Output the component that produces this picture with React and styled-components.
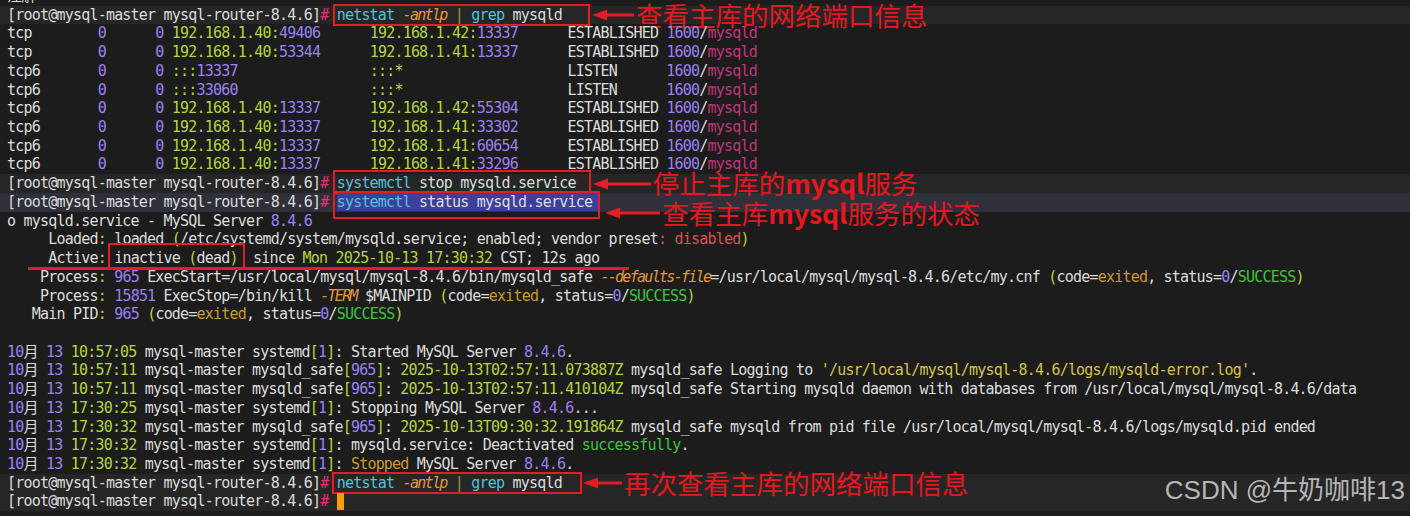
import React from 'react';
import styled, { createGlobalStyle } from 'styled-components';

const GlobalStyle = createGlobalStyle`
  html, body {
    margin: 0;
    padding: 0;
    background: #1c1c1c;
  }
`;

const RED = '#e51c23';
const ROW = 18.73;

const tones = {
  w: '#dcdcdc',
  p: '#9d80f2',
  g: '#b3d43e',
  c: '#4fc3d8',
  o: '#e3973a',
  m: '#c2367c',
  r: '#d9534f',
  s: '#3ec43e',
  e: '#c99a2e',
  y: '#d6c24a',
  h: '#e3336f',
  pipe: '#9c9440',
};

const bands = {
  prompt: '#262626',
  current: '#2f303a',
};

const Screen = styled.div`
  position: relative;
  width: 1410px;
  height: 516px;
  overflow: hidden;
  background: #1c1c1c;
`;

// scrolled terminal buffer: the line above the first prompt is cut by the window top
const Buffer = styled.div`
  margin-top: -13px;
  font-family: "DejaVu Sans Mono", "Noto Sans CJK SC", monospace;
  font-size: 15px;
  letter-spacing: -0.79px;
  color: #dcdcdc;
`;

const Line = styled.div`
  height: ${ROW}px;
  line-height: ${ROW}px;
  padding-left: 7px;
  white-space: pre;
  background: ${p => bands[p.$band] || 'transparent'};
`;

// the terminal's italic face is narrower than its upright one
const Seg = styled.span`
  color: ${p => tones[p.$tone]};
  font-style: ${p => (p.$tone === 'o' ? 'italic' : 'normal')};
  letter-spacing: ${p => (p.$tone === 'o' ? '-1.7px' : 'inherit')};
`;

const Selection = styled.span`
  background: #3c3f9c;
  padding-right: 6px;
`;

const Cursor = styled.span`
  display: inline-block;
  width: 7px;
  height: 17px;
  vertical-align: -4px;
  background: #f5a000;
`;

// hand-drawn red frame round a part of a line; it grows outward without moving the text
const Marked = styled.span`
  display: inline-block;
  vertical-align: top;
  border: 2px solid ${RED};
  padding: ${p => p.$t - 2}px ${p => p.$r - 2}px ${p => p.$b - 2}px ${p => p.$l - 2}px;
  margin: ${p => -p.$t}px 0 ${p => -p.$b}px ${p => -p.$l}px;
`;

const Callout = styled.span`
  display: inline-flex;
  align-items: center;
  gap: 2px;
  height: ${ROW}px;
  vertical-align: top;
  margin-left: ${p => p.$gap}px;
  padding-top: ${p => p.$drop}px;
  margin-bottom: ${p => -p.$drop}px;
`;

const Note = styled.span`
  font-family: "Noto Sans CJK SC", sans-serif;
  font-size: 26.5px;
  line-height: 1;
  letter-spacing: 0;
  color: #e8161f;
  white-space: nowrap;

  b {
    font-weight: 700;
  }
`;

const Strike = styled.div`
  width: 601px;
  height: 3px;
  margin: -1px 0 -2px 28px;
  background: ${RED};
  position: relative;
`;

const Watermark = styled.div`
  position: absolute;
  right: 5px;
  bottom: 13px;
  font-family: "Liberation Sans", "Noto Sans CJK SC", sans-serif;
  font-size: 26px;
  line-height: 1;
  color: #b6b6b6;
  white-space: nowrap;
`;

function Arrow({ len }) {
  return (
    <svg width={len} height={12} viewBox={`0 0 ${len} 12`}>
      <polygon points="0,6 15,0.5 15,11.5" fill={RED} />
      <rect x="13" y="4.5" width={len - 13} height="3" fill={RED} />
    </svg>
  );
}

const prompt = [['w', '[root@mysql-master mysql-router-8.4.6]'], ['h', '#'], ['w', ' ']];
const netstatCmd = [
  ['c', 'netstat'], ['w', ' '], ['o', '-antlp'], ['w', ' '], ['pipe', '|'],
  ['w', ' '], ['c', 'grep'], ['w', ' mysqld'],
];

const est = (proto, lport, rhost, rport) => [
  ['w', proto.padEnd(11)], ['p', '0'], ['w', '      '], ['p', '0'], ['w', ' '],
  ['g', '192.168.1.40:'], ['p', lport], ['w', '      '],
  ['g', `192.168.1.${rhost}:`], ['p', rport], ['w', '      '],
  ['w', 'ESTABLISHED '], ['p', '1600'], ['w', '/'], ['m', 'mysqld'],
];

const listen = port => [
  ['w', 'tcp6       '], ['p', '0'], ['w', '      '], ['p', '0'], ['w', ' '],
  ['g', ':::'], ['p', port], ['w', ' '.repeat(16)], ['g', ':::*'], ['w', ' '.repeat(20)],
  ['w', 'LISTEN      '], ['p', '1600'], ['w', '/'], ['m', 'mysqld'],
];

const exited = [
  ['g', '('], ['w', 'code='], ['e', 'exited'], ['w', ', status='], ['p', '0'],
  ['w', '/'], ['s', 'SUCCESS'], ['g', ')'],
];

const log = (time, proc, pid) => [
  ['p', '10'], ['w', '月 '], ['p', '13'], ['w', ' '], ['g', time],
  ['w', ` mysql-master ${proc}`], ['g', '['], ['p', pid], ['g', ']'], ['w', ': '],
];

const lines = [
  { segs: [['w', '注解']] },
  {
    band: 'prompt', segs: prompt,
    box: { segs: netstatCmd, t: 2, r: 28, b: 2, l: 4 },
    note: { gap: 2, drop: 0, len: 42, text: '查看主库的网络端口信息' },
  },
  { segs: est('tcp', '49406', '42', '13337') },
  { segs: est('tcp', '53344', '41', '13337') },
  { segs: listen('13337') },
  { segs: listen('33060') },
  { segs: est('tcp6', '13337', '42', '55304') },
  { segs: est('tcp6', '13337', '41', '33302') },
  { segs: est('tcp6', '13337', '41', '60654') },
  { segs: est('tcp6', '13337', '41', '33296') },
  {
    band: 'prompt', segs: prompt,
    box: { segs: [['c', 'systemctl'], ['w', ' stop mysqld.service']], t: 4, r: 15, b: 2, l: 4 },
    note: { gap: 2, drop: 0, len: 58, text: <>停止主库的<b>mysql</b>服务</> },
  },
  {
    band: 'current', segs: prompt,
    box: { selected: true, segs: [['c', 'systemctl'], ['w', ' status mysqld.service']], t: 2, r: 2, b: 7, l: 4 },
    note: { gap: 5, drop: 11, len: 55, text: <>查看主库<b>mysql</b>服务的状态</> },
  },
  { segs: [['w', 'o mysqld.service - MySQL Server '], ['p', '8.4.6']] },
  {
    segs: [
      ['w', '     Loaded'], ['g', ':'], ['w', ' loaded '], ['g', '('],
      ['w', '/etc/systemd/system/mysqld.service; enabled; vendor preset'],
      ['r', ': disabled'], ['g', ')'],
    ],
  },
  {
    segs: [['w', '     Active'], ['g', ':'], ['w', ' ']],
    box: { segs: [['w', 'inactive '], ['g', '('], ['w', 'dead'], ['g', ')']], t: 6, r: 7, b: 2, l: 6 },
    after: [['w', ' since '], ['g', 'Mon 2025-10-13 17:30:32'], ['w', ' CST; 12s ago']],
    strike: true,
  },
  {
    segs: [
      ['w', '    Process'], ['g', ':'], ['w', ' '], ['p', '965'],
      ['w', ' ExecStart=/usr/local/mysql/mysql-8.4.6/bin/mysqld_safe '], ['o', '--defaults-file'],
      ['w', '=/usr/local/mysql/mysql-8.4.6/etc/my.cnf '], ...exited,
    ],
  },
  {
    segs: [
      ['w', '    Process'], ['g', ':'], ['w', ' '], ['p', '15851'],
      ['w', ' ExecStop=/bin/kill '], ['o', '-TERM'], ['w', ' $MAINPID '], ...exited,
    ],
  },
  { segs: [['w', '   Main PID'], ['g', ':'], ['w', ' '], ['p', '965'], ['w', ' '], ...exited] },
  { segs: [] },
  { segs: [...log('10:57:05', 'systemd', '1'), ['w', 'Started MySQL Server '], ['p', '8.4.6'], ['w', '.']] },
  {
    segs: [
      ...log('10:57:11', 'mysqld_safe', '965'), ['g', '2025-10-13T02:57:11.073887Z'],
      ['w', ' mysqld_safe Logging to '], ['y', "'/usr/local/mysql/mysql-8.4.6/logs/mysqld-error.log'"], ['w', '.'],
    ],
  },
  {
    segs: [
      ...log('10:57:11', 'mysqld_safe', '965'), ['g', '2025-10-13T02:57:11.410104Z'],
      ['w', ' mysqld_safe Starting mysqld daemon with databases from /usr/local/mysql/mysql-8.4.6/data'],
    ],
  },
  { segs: [...log('17:30:25', 'systemd', '1'), ['w', 'Stopping MySQL Server '], ['p', '8.4.6'], ['w', '...']] },
  {
    segs: [
      ...log('17:30:32', 'mysqld_safe', '965'), ['g', '2025-10-13T09:30:32.191864Z'],
      ['w', ' mysqld_safe mysqld from pid file /usr/local/mysql/mysql'], ['g', '-'],
      ['w', '8.4.6/logs/mysqld.pid ended'],
    ],
  },
  { segs: [...log('17:30:32', 'systemd', '1'), ['w', 'mysqld.service: Deactivated '], ['s', 'successfully'], ['w', '.']] },
  { segs: [...log('17:30:32', 'systemd', '1'), ['e', 'Stopped'], ['w', ' MySQL Server '], ['p', '8.4.6'], ['w', '.']] },
  {
    band: 'prompt', segs: prompt,
    box: { segs: netstatCmd, t: 2, r: 20, b: 2, l: 5 },
    note: { gap: 1, drop: 0, len: 39, text: '再次查看主库的网络端口信息' },
  },
  { band: 'prompt', segs: prompt, cursor: true },
];

const renderSegs = segs =>
  segs.map(([tone, text], i) => (
    <Seg key={i} $tone={tone}>
      {text}
    </Seg>
  ));

function TermLine({ line }) {
  const { band, segs, box, after, note, cursor } = line;
  return (
    <Line $band={band}>
      {renderSegs(segs)}
      {box && (
        <Marked $t={box.t} $r={box.r} $b={box.b} $l={box.l}>
          {box.selected ? <Selection>{renderSegs(box.segs)}</Selection> : renderSegs(box.segs)}
        </Marked>
      )}
      {after && renderSegs(after)}
      {note && (
        <Callout $gap={note.gap} $drop={note.drop}>
          <Arrow len={note.len} />
          <Note>{note.text}</Note>
        </Callout>
      )}
      {cursor && <Cursor />}
    </Line>
  );
}

export default function App() {
  return (
    <Screen>
      <GlobalStyle />
      <Buffer>
        {lines.map((line, i) => (
          <React.Fragment key={i}>
            <TermLine line={line} />
            {line.strike && <Strike />}
          </React.Fragment>
        ))}
      </Buffer>
      <Watermark>CSDN @牛奶咖啡13</Watermark>
    </Screen>
  );
}
